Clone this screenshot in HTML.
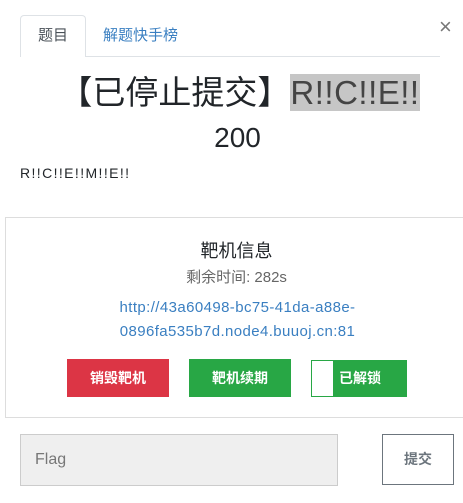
<!DOCTYPE html>
<html><head><meta charset="utf-8"><style>
*{margin:0;padding:0;box-sizing:border-box}
body{width:463px;height:503px;background:#fff;font-family:"Liberation Sans","Noto Sans CJK SC",sans-serif;position:relative;overflow:hidden;color:#212529}
.a{position:absolute}
</style></head><body>
<div class="a" style="left:20px;top:56px;width:420px;height:1px;background:#dee2e6"></div>
<div class="a" style="left:20px;top:15px;width:66px;height:42px;border:1px solid #dee2e6;border-bottom:none;background:#fff;border-radius:4px 4px 0 0;font-size:15px;line-height:40px;text-align:center;color:#495057">题目</div>
<div class="a" style="left:103px;top:15px;font-size:15px;line-height:42px;color:#3a7fc1">解题快手榜</div>
<div class="a" style="left:439px;top:14px;font-size:22px;color:#777;line-height:26px">×</div>
<div class="a" style="left:0;top:71px;width:463px;text-align:center;font-size:33px;line-height:44px;white-space:nowrap;padding-left:16px">【已停止提交】<span style="background:#c6c6c6;color:#444;letter-spacing:0.5px">R!!C!!E!!</span></div>
<div class="a" style="left:0;top:120px;width:463px;text-align:center;font-size:28px;line-height:36px;padding-left:12px">200</div>
<div class="a" style="left:20px;top:164px;font-size:14px;line-height:18px;letter-spacing:1.4px">R!!C!!E!!M!!E!!</div>
<div class="a" style="left:5px;top:217px;width:470px;height:201px;border:1px solid #ddd"></div>
<div class="a" style="left:0;top:238px;width:463px;text-align:center;font-size:18px;line-height:26px;padding-left:10px">靶机信息</div>
<div class="a" style="left:0;top:267px;width:463px;text-align:center;font-size:15px;line-height:22px;color:#666;padding-left:10px">剩余时间: 282s</div>
<div class="a" style="left:0;top:296px;width:463px;text-align:center;font-size:15px;line-height:24px;color:#3a7fc1;padding-left:12px;letter-spacing:0.4px">http://43a60498-bc75-41da-a88e-<br>0896fa535b7d.node4.buuoj.cn:81</div>
<div class="a" style="left:67px;top:359px;width:102px;height:38px;background:#dc3545;color:#fff;font-weight:bold;font-size:14px;line-height:38px;text-align:center">销毁靶机</div>
<div class="a" style="left:189px;top:359px;width:102px;height:38px;background:#28a745;color:#fff;font-weight:bold;font-size:14px;line-height:38px;text-align:center">靶机续期</div>
<div class="a" style="left:311px;top:360px;width:96px;height:37px;background:#28a745;color:#fff;font-weight:bold;font-size:14px;line-height:37px;padding-left:28px;text-align:left"><span style="position:absolute;left:1px;top:1px;width:21px;height:35px;background:#fff"></span>已解锁</div>
<div class="a" style="left:20px;top:434px;width:318px;height:52px;background:#efefef;border:1px solid #ccc;font-size:16px;line-height:50px;padding-left:14px;color:#777">Flag</div>
<div class="a" style="left:382px;top:434px;width:72px;height:51px;border:1px solid #6c757d;font-size:14px;line-height:49px;text-align:center;color:#6c757d;font-weight:bold">提交</div>
</body></html>
